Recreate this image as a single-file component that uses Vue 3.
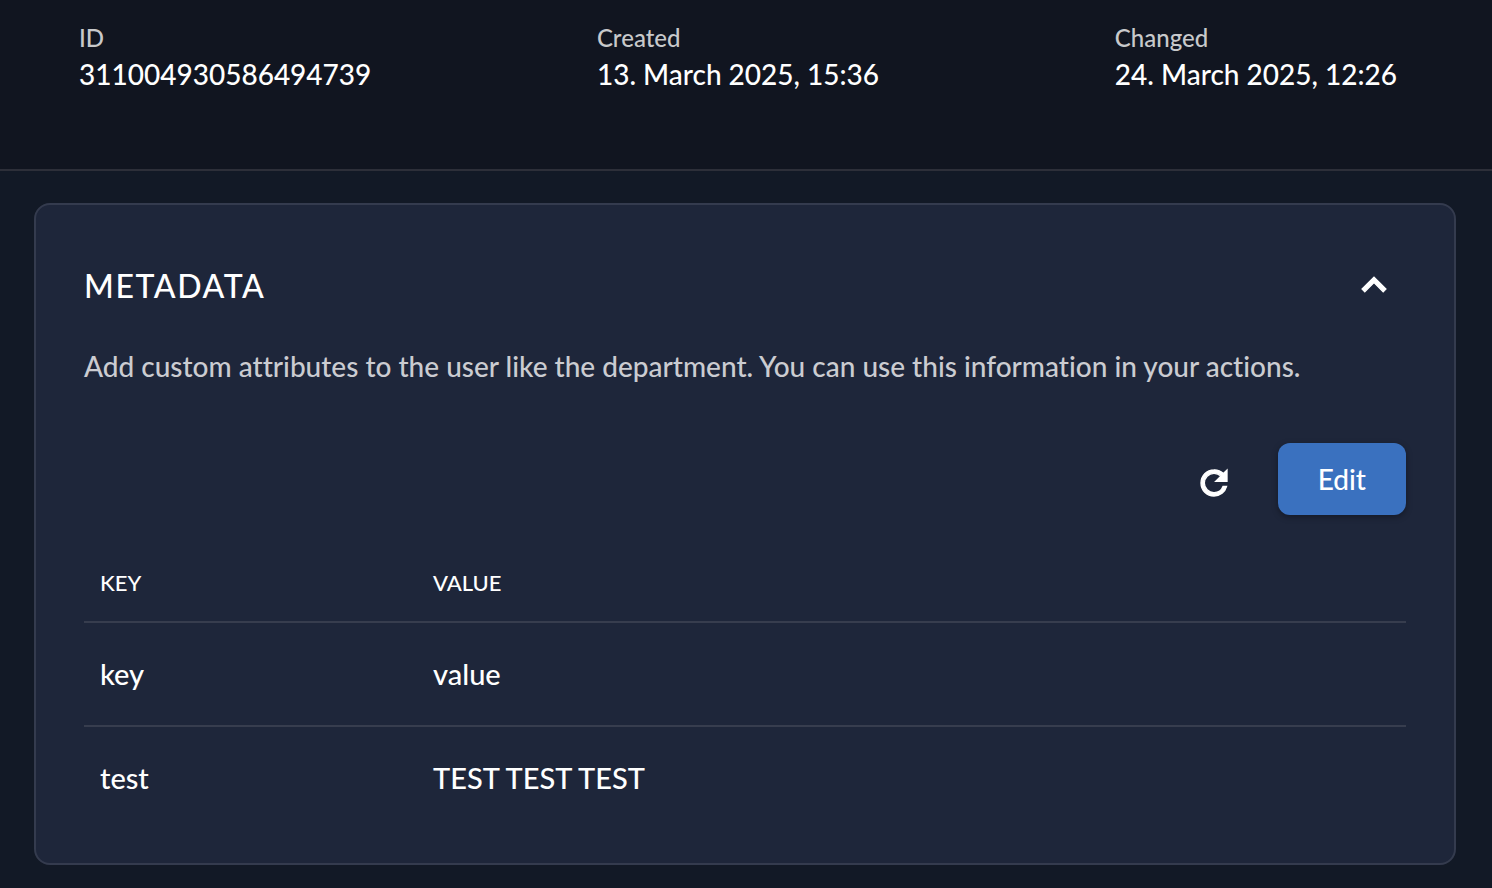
<script setup>
import { ref } from 'vue'

const expanded = ref(true)

const info = [
  { label: 'ID', value: '311004930586494739' },
  { label: 'Created', value: '13. March 2025, 15:36' },
  { label: 'Changed', value: '24. March 2025, 12:26' },
]

const metadata = [
  { key: 'key', value: 'value' },
  { key: 'test', value: 'TEST TEST TEST' },
]
</script>

<template>
  <div class="page">
    <header class="top">
      <dl class="info">
        <div v-for="item in info" :key="item.label">
          <dt>{{ item.label }}</dt>
          <dd>{{ item.value }}</dd>
        </div>
      </dl>
    </header>

    <main class="content">
      <section class="card" aria-labelledby="metadata-title">
        <div class="card-head">
          <h2 id="metadata-title">METADATA</h2>
          <button
            class="icon-button"
            type="button"
            aria-label="Toggle section"
            :aria-expanded="expanded"
            @click="expanded = !expanded"
          >
            <svg width="48" height="48" viewBox="0 0 24 24" aria-hidden="true">
              <path d="M7.41 15.41 12 10.83l4.59 4.58L18 14l-6-6-6 6z" fill="currentColor" stroke="currentColor" stroke-width="0.6" />
            </svg>
          </button>
        </div>

        <template v-if="expanded">
          <p class="desc">
            Add custom attributes to the user like the department. You can use this information in your actions.
          </p>

          <div class="actions">
            <button class="icon-button refresh" type="button" aria-label="Refresh">
              <svg width="40" height="40" viewBox="0 0 24 24" aria-hidden="true">
                <path d="M17.65 6.35A7.7 7.7 0 0 0 12 4.1c-4.36 0-7.8 3.5-7.8 7.9s3.44 7.8 7.8 7.8c3.68 0 6.7-2.5 7.55-5.8h-2.08A5.8 5.8 0 0 1 12 17.8c-3.2 0-5.8-2.6-5.8-5.8s2.6-5.8 5.8-5.8c1.6 0 3.04.6 4.1 1.66L13 11h6.8V4.2z" fill="currentColor" stroke="currentColor" stroke-width="0.8" />
              </svg>
            </button>
            <button class="edit" type="button">Edit</button>
          </div>

          <table>
            <thead>
              <tr>
                <th scope="col">KEY</th>
                <th scope="col">VALUE</th>
              </tr>
            </thead>
            <tbody>
              <tr v-for="row in metadata" :key="row.key">
                <td>{{ row.key }}</td>
                <td>{{ row.value }}</td>
              </tr>
            </tbody>
          </table>
        </template>
      </section>
    </main>
  </div>
</template>

<style>
body {
  margin: 0;
  background: #121926;
}
</style>

<style scoped>
.page {
  min-height: 100vh;
  box-sizing: border-box;
  background: #121926;
  color: #fff;
  font-family: Lato, "Liberation Sans", sans-serif;
  font-size: 28px;
  font-weight: 500;
  font-variant-ligatures: none;
  line-height: 40px;
}

.top {
  padding: 20px 95px 77px 79px;
  background: #111520;
  border-bottom: 2px solid #2d2f39;
}

.info {
  display: grid;
  grid-template-columns: 1fr 1fr auto;
  margin: 0;
}

.info dt {
  font-size: 24px;
  line-height: 36px;
  color: #c8c9cb;
}

.info dd {
  margin: 0;
  line-height: 36px;
  white-space: nowrap;
}

.content {
  padding: 32px 36px 23px 34px;
}

.card {
  padding: 48px 48px 34px;
  background: #1e263a;
  border: 2px solid #343b4e;
  border-radius: 16px;
}

.card-head {
  display: flex;
  align-items: center;
  justify-content: space-between;
  height: 64px;
  padding-right: 8px;
}

h2 {
  margin: 0;
  font-size: 32px;
  font-weight: 500;
  line-height: 42px;
  padding-top: 2px;
  letter-spacing: 0.05em;
}

.icon-button {
  display: flex;
  padding: 0;
  border: 0;
  background: none;
  color: #fff;
  cursor: pointer;
}

.desc {
  margin: 29px 0 57px;
  color: #cbccd1;
}

.actions {
  display: flex;
  align-items: center;
  justify-content: flex-end;
  gap: 44px;
}

.refresh {
  padding-top: 8px;
}

.edit {
  height: 72px;
  padding: 0 40px;
  border: 0;
  border-radius: 12px;
  background: #3a71bf;
  box-shadow: 0 2px 6px rgba(0, 0, 0, 0.35);
  color: #fff;
  font: inherit;
  cursor: pointer;
}

table {
  width: 100%;
  margin-top: 28px;
  border-collapse: collapse;
  table-layout: fixed;
}

th,
td {
  padding: 0 16px;
  text-align: left;
}

th {
  height: 76px;
  padding-top: 2px;
  font-size: 22px;
  font-weight: 500;
}

th:first-child {
  width: 301px;
}

td {
  height: 102px;
  border-top: 2px solid #373d4e;
  font-size: 29px;
}
</style>
